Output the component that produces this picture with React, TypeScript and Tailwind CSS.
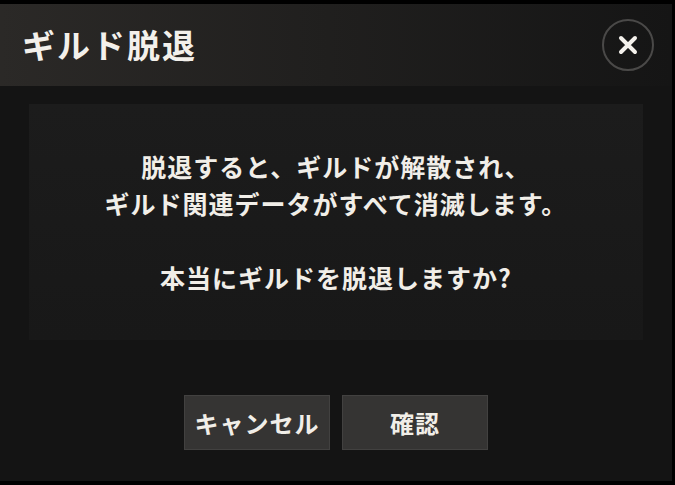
const font = { fontFamily: '"Noto Sans CJK JP", "Noto Sans", sans-serif' };

function CloseButton() {
  return (
    <button className="flex h-[52px] w-[52px] items-center justify-center rounded-full border-[2px] border-[#4a4948] bg-transparent">
      <svg width="20" height="20" viewBox="0 0 20 20">
        <path d="M3 3 L17 17 M17 3 L3 17" stroke="#f4f1ec" strokeWidth="4" strokeLinecap="round" />
      </svg>
    </button>
  );
}

export default function App() {
  return (
    <div className="h-[485px] w-[675px] bg-black pt-[4px] pr-[3px] pb-[4px]" style={font}>
      <div className="flex h-full flex-col">
        <div className="flex h-[82px] items-center justify-between bg-gradient-to-r from-[#2b2927] to-[#151515] pl-[22px] pr-[18px]">
          <h1 className="text-[33px] font-bold tracking-[2px] text-[#f3f0eb]">ギルド脱退</h1>
          <CloseButton />
        </div>

        <div className="flex flex-1 flex-col bg-[#141414] px-[29px] pt-[18px]">
          <div className="flex h-[236px] flex-col items-center justify-center bg-gradient-to-b from-[#1c1c1c] to-[#181818] text-center text-[25px] font-bold leading-[37px] tracking-[1px] text-[#f1eee8]">
            <p>脱退すると、ギルドが解散され、</p>
            <p>ギルド関連データがすべて消滅します。</p>
            <p>&nbsp;</p>
            <p>本当にギルドを脱退しますか?</p>
          </div>

          <div className="mt-[55px] flex justify-center gap-[12px]">
            <button className="h-[55px] w-[146px] border border-[#424140] bg-[#353433] text-[24px] font-bold tracking-[1px] text-[#f1eee8]">
              キャンセル
            </button>
            <button className="h-[55px] w-[146px] border border-[#424140] bg-[#353433] text-[24px] font-bold tracking-[1px] text-[#f1eee8]">
              確認
            </button>
          </div>
        </div>
      </div>
    </div>
  );
}
